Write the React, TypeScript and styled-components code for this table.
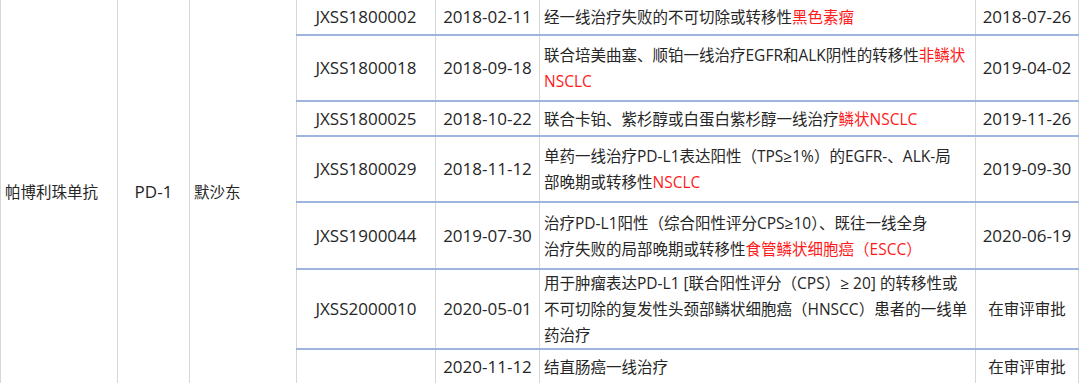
import React from 'react'
import styled, { createGlobalStyle } from 'styled-components'

const GlobalStyle = createGlobalStyle`
  html, body {
    margin: 0;
    padding: 0;
    background: #ffffff;
  }
  body {
    font-family: 'Open Sans', 'Noto Sans CJK SC', sans-serif;
    color: #262626;
  }
`

const Table = styled.table`
  width: 1078px;
  border-collapse: collapse;
  table-layout: fixed;
  font-size: 15.5px;
  line-height: 26px;
  border-left: 1px solid #d6d6d6;
  border-right: 1px solid #d6d6d6;
  border-bottom: 2px solid #9fb5e0;
`

const Row = styled.tr<{ $h: number }>`
  height: ${p => p.$h}px;
`

const Cell = styled.td<{ $align?: 'left' | 'center'; $latin?: boolean; $top?: boolean }>`
  padding: 0 4px;
  text-align: ${p => p.$align || 'center'};
  vertical-align: middle;
  white-space: nowrap;
  overflow: hidden;
  font-size: ${p => (p.$latin ? '17px' : '15.5px')};
  border-left: 1px solid #d6d6d6;
  border-right: 1px solid #d6d6d6;
  border-top: ${p => (p.$top ? 'none' : '2px solid #9fb5e0')};
`

const Red = styled.span`
  color: #ff1a1a;
`

type Item = {
  code: string
  date: string
  text: React.ReactNode
  result: string
  h: number
}

const items: Item[] = [
  {
    code: 'JXSS1800002',
    date: '2018-02-11',
    text: <>经一线治疗失败的不可切除或转移性<Red>黑色素瘤</Red></>,
    result: '2018-07-26',
    h: 35,
  },
  {
    code: 'JXSS1800018',
    date: '2018-09-18',
    text: <>联合培美曲塞、顺铂一线治疗EGFR和ALK阴性的转移性<Red>非鳞状</Red><br /><Red>NSCLC</Red></>,
    result: '2019-04-02',
    h: 66,
  },
  {
    code: 'JXSS1800025',
    date: '2018-10-22',
    text: <>联合卡铂、紫杉醇或白蛋白紫杉醇一线治疗<Red>鳞状NSCLC</Red></>,
    result: '2019-11-26',
    h: 35,
  },
  {
    code: 'JXSS1800029',
    date: '2018-11-12',
    text: <>单药一线治疗PD-L1表达阳性（TPS≥1%）的EGFR-、ALK-局<br />部晚期或转移性<Red>NSCLC</Red></>,
    result: '2019-09-30',
    h: 66,
  },
  {
    code: 'JXSS1900044',
    date: '2019-07-30',
    text: <>治疗PD-L1阳性（综合阳性评分CPS≥10）、既往一线全身<br />治疗失败的局部晚期或转移性<Red>食管鳞状细胞癌（ESCC）</Red></>,
    result: '2020-06-19',
    h: 67,
  },
  {
    code: 'JXSS2000010',
    date: '2020-05-01',
    text: <>用于肿瘤表达PD-L1 [联合阳性评分（CPS）≥ 20] 的转移性或<br />不可切除的复发性头颈部鳞状细胞癌（HNSCC）患者的一线单<br />药治疗</>,
    result: '在审评审批',
    h: 78,
  },
  {
    code: '',
    date: '2020-11-12',
    text: <>结直肠癌一线治疗</>,
    result: '在审评审批',
    h: 35,
  },
]

const isLatin = (s: string) => /^[\x00-\x7f]*$/.test(s)

export default function App() {
  const span = items.length
  return (
    <>
      <GlobalStyle />
      <Table>
        <colgroup>
          <col style={{ width: 117 }} />
          <col style={{ width: 72 }} />
          <col style={{ width: 107 }} />
          <col style={{ width: 139 }} />
          <col style={{ width: 104 }} />
          <col style={{ width: 436 }} />
          <col style={{ width: 103 }} />
        </colgroup>
        <tbody>
          {items.map((it, i) => {
            const top = i === 0
            return (
              <Row key={i} $h={it.h}>
                {top && (
                  <>
                    <Cell rowSpan={span} $top $align="left">帕博利珠单抗</Cell>
                    <Cell rowSpan={span} $top $latin>PD-1</Cell>
                    <Cell rowSpan={span} $top $align="left">默沙东</Cell>
                  </>
                )}
                <Cell $top={top} $latin>{it.code}</Cell>
                <Cell $top={top} $latin>{it.date}</Cell>
                <Cell $top={top} $align="left">{it.text}</Cell>
                <Cell $top={top} $latin={isLatin(it.result)}>{it.result}</Cell>
              </Row>
            )
          })}
        </tbody>
      </Table>
    </>
  )
}
